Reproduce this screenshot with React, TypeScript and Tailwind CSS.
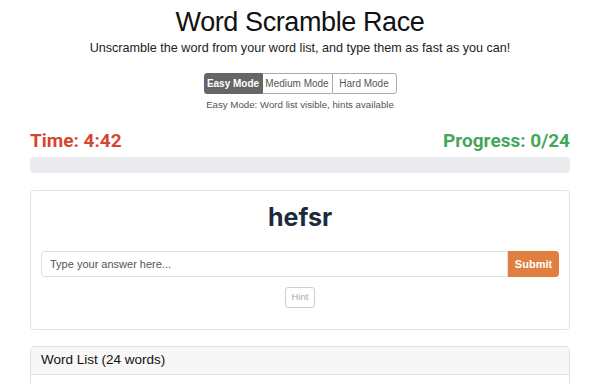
import React from "react";

export default function App() {
  return (
    <div className="w-[600px] h-[384px] overflow-hidden bg-white" style={{ fontFamily: '"Liberation Sans", Arial, sans-serif' }}>
      <div className="w-[540px] mx-auto">
        <h1 className="text-center text-[27px] h-[42px] leading-[44px] tracking-[-0.4px] text-[#111]">Word Scramble Race</h1>
        <p className="text-center text-[12.6px] h-[16px] leading-[16px] mt-[-2px] text-[#222]">Unscramble the word from your word list, and type them as fast as you can!</p>
        <div className="flex justify-center mt-[17px]">
          <div className="flex text-[10px] h-[21px]">
            <button className="w-[59px] bg-[#666] text-white font-bold border border-[#666] rounded-l-[3px]">Easy Mode</button>
            <button className="w-[69px] bg-white text-[#555] border-y border-[#aaa]">Medium Mode</button>
            <button className="w-[65px] bg-white text-[#555] border border-[#aaa] rounded-r-[3px]">Hard Mode</button>
          </div>
        </div>
        <p className="text-center text-[9.7px] h-[14px] leading-[14px] text-[#555] mt-[4px]">Easy Mode: Word list visible, hints available</p>
        <div className="flex justify-between mt-[17px] h-[22px] items-center text-[19px] font-bold leading-none" style={{ fontFamily: 'Roboto, sans-serif' }}>
          <span className="text-[#d7452f]">Time: 4:42</span>
          <span className="text-[#45a75a]">Progress: 0/24</span>
        </div>
        <div className="h-[16px] bg-[#e9ebee] rounded-[4px] mt-[6px]"></div>
        <div className="border border-[#dee2e6] rounded-[4px] mt-[17px] h-[140px] px-[10px]">
          <div className="text-center text-[25px] font-bold text-[#1c2a3d] mt-[14px] leading-none" style={{ fontFamily: 'Inter, sans-serif' }}>hefsr</div>
          <div className="flex mt-[21px] h-[26px]">
            <div className="flex-1 border border-[#dee2e6] rounded-l-[4px] flex items-center px-[8px] text-[11px] text-[#555]">Type your answer here...</div>
            <button className="w-[51px] bg-[#e07f3f] text-white text-[11px] font-bold rounded-r-[4px]">Submit</button>
          </div>
          <div className="flex justify-center mt-[10px]">
            <button className="h-[21px] w-[30px] text-[9.5px] text-[#aaa] border border-[#ccd] rounded-[3px]">Hint</button>
          </div>
        </div>
        <div className="border border-[#dee2e6] rounded-[4px] mt-[16px] h-[60px]">
          <div className="h-[28px] bg-[#f7f7f7] border-b border-[#dee2e6] flex items-center px-[10px] text-[13.5px] text-[#111]">Word List (24 words)</div>
        </div>
      </div>
    </div>
  );
}
